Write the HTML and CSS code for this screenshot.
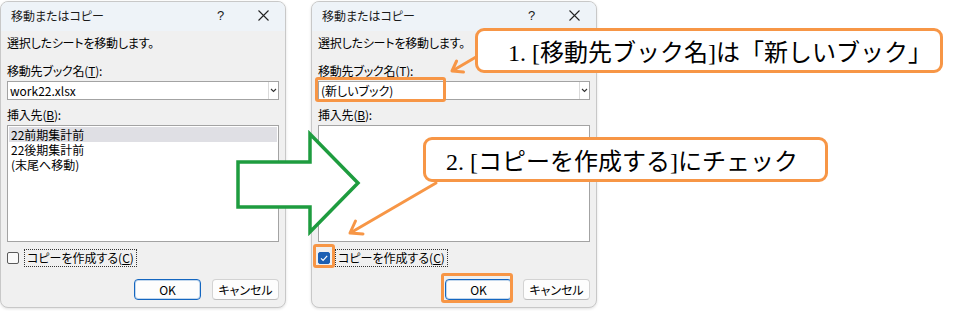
FILE: index.html
```html
<!DOCTYPE html>
<html lang="ja">
<head>
<meta charset="utf-8">
<title>移動またはコピー</title>
<link rel="stylesheet" href="styles.css">
</head>
<body>
<div class="stage">
  <div class="dialog">
    <div class="titlebar">
      <span class="title">移動またはコピー</span>
      <span class="tbtn help">?</span>
      <span class="tbtn"><svg width="11" height="11" viewBox="0 0 11 11"><path d="M0.5 0.5L10.5 10.5M10.5 0.5L0.5 10.5" stroke="#222" stroke-width="1.1" fill="none"/></svg></span>
    </div>
    <div class="body">
      <div class="line first">選択したシートを移動します。</div>
      <div class="line lab1">移動先ブック名(<u>T</u>):</div>
      <div class="combo"><span class="ctext">work22.xlsx</span><span class="drop"><svg width="7" height="5" viewBox="0 0 7 5"><path d="M1 1L3.5 3.5L6 1" stroke="#333" stroke-width="1.1" fill="none"/></svg></span></div>
      <div class="line lab2">挿入先(<u>B</u>):</div>
      <div class="listbox">
        <div class="item sel">22前期集計前</div>
        <div class="item">22後期集計前</div>
        <div class="item">(末尾へ移動)</div>
      </div>
      <div class="checkrow"><span class="cb"></span><span class="cblabel">コピーを作成する(<u>C</u>)</span></div>
      <div class="buttons"><span class="btn primary">OK</span><span class="btn">キャンセル</span></div>
    </div>
  </div>

  <div class="dialog">
    <div class="titlebar">
      <span class="title">移動またはコピー</span>
      <span class="tbtn help">?</span>
      <span class="tbtn"><svg width="11" height="11" viewBox="0 0 11 11"><path d="M0.5 0.5L10.5 10.5M10.5 0.5L0.5 10.5" stroke="#222" stroke-width="1.1" fill="none"/></svg></span>
    </div>
    <div class="body">
      <div class="line first">選択したシートを移動します。</div>
      <div class="line lab1">移動先ブック名(<u>T</u>):</div>
      <div class="combo"><span class="ctext">(新しいブック)</span><span class="drop"><svg width="7" height="5" viewBox="0 0 7 5"><path d="M1 1L3.5 3.5L6 1" stroke="#333" stroke-width="1.1" fill="none"/></svg></span></div>
      <div class="line lab2">挿入先(<u>B</u>):</div>
      <div class="listbox"></div>
      <div class="checkrow"><span class="cb checked"><svg width="12" height="12" viewBox="0 0 12 12"><path d="M3 6.3L5.1 8.4L9.2 3.9" stroke="#fff" stroke-width="1.2" fill="none"/></svg></span><span class="cblabel">コピーを作成する(<u>C</u>)</span></div>
      <div class="buttons"><span class="btn primary">OK</span><span class="btn">キャンセル</span></div>
    </div>
  </div>

  <svg class="overlay" width="975" height="311" viewBox="0 0 975 311">
    <polygon points="238,162 310,162 310,134 358,183 310,232 310,207 238,207" fill="#fff" stroke="#1e9c3f" stroke-width="3.5"/>
  </svg>

  <div class="callout c1">1. [移動先ブック名]は「新しいブック」</div>
  <div class="callout c2">2. [コピーを作成する]にチェック</div>

  <div class="hl hl1"></div>
  <div class="hl hl2"></div>
  <div class="hl hl3"></div>

  <svg class="overlay" width="975" height="311" viewBox="0 0 975 311">
    <g stroke="#f79646" stroke-width="3" fill="none" stroke-linecap="round" stroke-linejoin="round">
      <line x1="476" y1="57" x2="453" y2="70.5"/>
      <polyline points="463.5,72 452,71 456.6,61"/>
      <line x1="436" y1="183" x2="351" y2="232.5"/>
      <polyline points="363,234 350,233 355.5,221"/>
    </g>
  </svg>
</div>
</body>
</html>
```

FILE: styles.css
```css
* { box-sizing: border-box; }

body {
  margin: 0;
  background: #fff;
  font-family: "Noto Sans CJK JP", "Noto Sans", sans-serif;
  font-size: 12px;
  color: #000;
  font-feature-settings: "palt";
}

.stage {
  position: relative;
  width: 975px;
  height: 311px;
  display: flex;
  gap: 25px;
  padding-top: 1px;
  overflow: hidden;
}

.dialog {
  width: 286px;
  height: 307px;
  flex: none;
  border: 1px solid #c8c8c8;
  border-radius: 8px;
  background: #f0f0f0;
  display: flex;
  flex-direction: column;
  overflow: hidden;
  box-shadow: 0 1px 3px rgba(0, 0, 0, 0.12);
}

.titlebar {
  height: 29px;
  flex: none;
  background: #eef3f8;
  display: flex;
  align-items: center;
  padding: 0 0 3px 10px;
}

.title {
  flex: 1;
  color: #1a1a1a;
  font-size: 12px;
}

.tbtn {
  width: 43px;
  display: flex;
  justify-content: center;
  align-items: center;
  color: #1a1a1a;
}

.help {
  font-family: "Liberation Sans", sans-serif;
  font-size: 13px;
}

.body {
  padding: 0 6px 7px 6px;
  display: flex;
  flex-direction: column;
}

.line {
  height: 16px;
  line-height: 16px;
  white-space: nowrap;
  letter-spacing: -0.2px;
}

.first { margin-top: 4px; }
.lab1 { margin-top: 12px; }
.lab2 { margin-top: 7px; }

.combo {
  margin-top: 2px;
  height: 19px;
  background: #fff;
  border: 1px solid #a3a3a3;
  display: flex;
  align-items: stretch;
}

.ctext {
  flex: 1;
  padding-left: 2px;
  line-height: 17px;
}

.drop {
  width: 10px;
  border-left: 1px solid #dadada;
  display: flex;
  align-items: center;
  justify-content: center;
}

.listbox {
  margin-top: 2px;
  height: 117px;
  background: #fff;
  border: 1px solid #a3a3a3;
  padding: 1px;
}

.item {
  height: 15px;
  line-height: 15px;
  padding-left: 2px;
  overflow: hidden;
}

.item.sel { background: #dfdfe4; }

.checkrow {
  margin-top: 7px;
  height: 18px;
  display: flex;
  align-items: center;
}

.cb {
  width: 12px;
  height: 12px;
  border: 1px solid #5a5a5a;
  border-radius: 2px;
  background: #fafafa;
  display: flex;
}

.cb.checked {
  background: #1b5fb3;
  border-color: #1b5fb3;
}

.cb.checked svg { margin: -1px; }

.cblabel {
  margin-left: 5px;
  height: 18px;
  line-height: 16px;
  padding: 0 2px;
  border: 1px dotted #333;
}

.buttons {
  margin-top: 12px;
  display: flex;
  justify-content: flex-end;
  gap: 11px;
}

.btn {
  width: 67px;
  height: 21px;
  border: 1px solid #d3d3d3;
  border-bottom-color: #bdbdbd;
  border-radius: 4px;
  background: #fdfdfd;
  display: flex;
  align-items: center;
  justify-content: center;
}

.btn.primary {
  border-color: #1466c0;
  box-shadow: inset 0 0 0 1px rgba(20, 102, 192, 0.25);
}

.overlay {
  position: absolute;
  left: 0;
  top: 0;
  pointer-events: none;
}

.callout {
  position: absolute;
  height: 45px;
  background: #fff;
  border: 3px solid #f79646;
  border-radius: 9px;
  display: flex;
  align-items: center;
  font-family: "Liberation Serif", "Noto Sans CJK JP", serif;
  font-size: 24px;
  font-feature-settings: normal;
  white-space: nowrap;
  color: #000;
}

.c1 { left: 475px; top: 28px; width: 468px; padding-left: 30px; }
.c2 { left: 423px; top: 137px; width: 405px; padding-left: 20px; }

.hl {
  position: absolute;
  border: 3px solid #f79646;
  border-radius: 3px;
}

.hl1 { left: 315px; top: 77px; width: 131px; height: 25px; }
.hl2 { left: 313px; top: 244px; width: 22px; height: 24px; }
.hl3 { left: 441px; top: 273px; width: 72px; height: 30px; }
```
